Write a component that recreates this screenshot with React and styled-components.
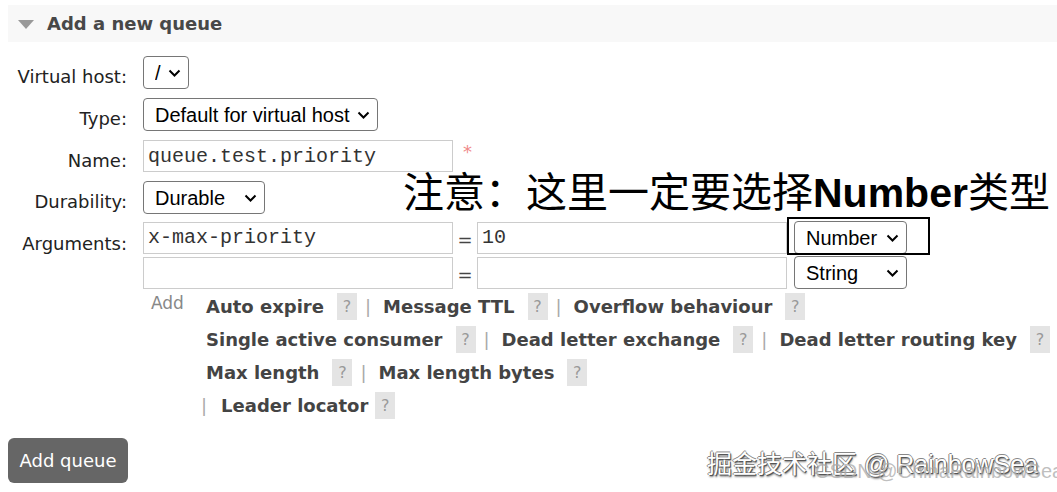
import styled, { createGlobalStyle } from "styled-components";

const GlobalStyle = createGlobalStyle`
  html, body {
    margin: 0;
    padding: 0;
    background: #fff;
  }
  body {
    font-family: "DejaVu Sans", Verdana, sans-serif;
    color: #444;
  }
  * {
    box-sizing: border-box;
  }
`;

const Page = styled.div`
  position: relative;
  width: 1057px;
  height: 492px;
  overflow: hidden;
  padding: 5px 0 0 8px;
`;

const SectionHeader = styled.div`
  display: flex;
  align-items: center;
  gap: 13px;
  height: 37px;
  padding-left: 10px;
  background: #f8f8f8;
`;

const Triangle = styled.span`
  width: 0;
  height: 0;
  border-left: 8px solid transparent;
  border-right: 8px solid transparent;
  border-top: 9px solid #999;
  margin-top: 2px;
`;

const SectionTitle = styled.h2`
  margin: 0;
  font-size: 18px;
  font-weight: bold;
  color: #484848;
`;

const Form = styled.div`
  display: grid;
  grid-template-columns: 119px 1fr;
  column-gap: 16px;
  row-gap: 9px;
  margin-top: 14px;
`;

const Label = styled.label`
  text-align: right;
  font-size: 18px;
  line-height: 22px;
  padding-top: 10px;
  color: #222;
  white-space: nowrap;
`;

const Field = styled.div`
  display: flex;
  align-items: center;
`;

const SelectBox = styled.div`
  position: relative;
  display: inline-flex;
  flex-shrink: 0;
`;

const Select = styled.select`
  appearance: none;
  -webkit-appearance: none;
  width: ${(p) => p.$width}px;
  height: 33px;
  padding: 0 0 0 11px;
  border: 1px solid #767676;
  border-radius: 4px;
  background: #fff;
  color: #000;
  font-family: "Liberation Sans", Arial, sans-serif;
  font-size: 20px;
`;

const Chevron = styled.svg`
  position: absolute;
  right: 8px;
  top: 13px;
  width: 13px;
  height: 8px;
  pointer-events: none;
`;

const TextInput = styled.input`
  width: ${(p) => p.$width}px;
  height: 32px;
  padding: 0 4px;
  border: 1px solid #ccc;
  border-radius: 0;
  background: #fff;
  color: #333;
  font-family: "Liberation Mono", "Courier New", monospace;
  font-size: 20px;
  outline: none;
`;

const Required = styled.span`
  color: #f08a8a;
  font-size: 18px;
  line-height: 20px;
  margin-left: 10px;
  align-self: flex-start;
  margin-top: 2px;
`;

const ArgRows = styled.div`
  display: flex;
  flex-direction: column;
  gap: 2px;
  margin-top: -2px;
`;

const ArgRow = styled.div`
  display: flex;
  align-items: center;
`;

const Equals = styled.span`
  width: 24px;
  text-align: center;
  font-size: 18px;
  color: #444;
  padding-top: 4px;
`;

const TypeSelect = styled.div`
  margin-left: 7px;
`;

const AddArea = styled.div`
  display: flex;
  margin-top: -1px;
`;

const AddLabel = styled.span`
  width: 63px;
  padding-left: 8px;
  font-size: 17px;
  line-height: 27px;
  color: #888;
`;

const LinkList = styled.div`
  display: flex;
  flex-direction: column;
`;

const LinkRow = styled.div`
  display: flex;
  align-items: center;
  height: 33px;
  margin-left: ${(p) => p.$shift || 0}px;
`;

const ArgLink = styled.span`
  font-size: 18px;
  font-weight: bold;
  color: #444;
  white-space: nowrap;
`;

const Help = styled.span`
  display: inline-flex;
  align-items: center;
  justify-content: center;
  width: 20px;
  height: 27px;
  margin-left: ${(p) => p.$gap ?? 13}px;
  background: #e4e4e4;
  color: #999;
  font-size: 16px;
`;

const Sep = styled.span`
  margin: ${(p) => (p.$lead ? "0 14px 0 0" : "0 12px 0 8px")};
  color: #aaa;
  font-size: 18px;
`;

const SubmitButton = styled.button`
  margin-top: 16px;
  width: 120px;
  height: 45px;
  border: none;
  border-radius: 6px;
  background: #666;
  color: #fff;
  font-family: "DejaVu Sans", Verdana, sans-serif;
  font-size: 18px;
`;

const Note = styled.div`
  position: absolute;
  left: 403px;
  top: 167px;
  font-family: "Noto Sans CJK SC", sans-serif;
  font-size: 41px;
  line-height: 44px;
  color: #000;
  white-space: nowrap;

  b {
    font-family: "Liberation Sans", Arial, sans-serif;
    font-weight: bold;
  }
`;

const Highlight = styled.div`
  position: absolute;
  left: 787px;
  top: 217px;
  width: 143px;
  height: 38px;
  border: 2px solid #000;
  pointer-events: none;
`;

const Watermark = styled.div`
  position: absolute;
  left: 707px;
  top: 444px;
  font-family: "Liberation Sans", "Noto Sans CJK SC", sans-serif;
  font-size: 25px;
  color: #fff;
  white-space: nowrap;
  text-shadow: 1px 1px 0 #555, -1px 0 0 #888, 0 -1px 0 #888, 1px 2px 2px #777;
`;

const SubMark = styled.div`
  position: absolute;
  left: 815px;
  top: 460px;
  font-family: "Liberation Sans", Arial, sans-serif;
  font-size: 20px;
  color: rgba(170, 170, 170, 0.75);
  white-space: nowrap;
`;

function Dropdown({ width, value, options }) {
  return (
    <SelectBox>
      <Select $width={width} defaultValue={value}>
        {options.map((o) => (
          <option key={o}>{o}</option>
        ))}
      </Select>
      <Chevron viewBox="0 0 13 8">
        <path d="M1.5 1.5 L6.5 6.5 L11.5 1.5" fill="none" stroke="#000" strokeWidth="2" />
      </Chevron>
    </SelectBox>
  );
}

const linkRows = [
  ["Auto expire", "Message TTL", "Overflow behaviour"],
  ["Single active consumer", "Dead letter exchange", "Dead letter routing key"],
  ["Max length", "Max length bytes"],
];

export default function App() {
  return (
    <Page>
      <GlobalStyle />
      <SectionHeader>
        <Triangle />
        <SectionTitle>Add a new queue</SectionTitle>
      </SectionHeader>

      <Form>
        <Label>Virtual host:</Label>
        <Field>
          <Dropdown width={46} value="/" options={["/"]} />
        </Field>

        <Label>Type:</Label>
        <Field>
          <Dropdown width={235} value="Default for virtual host" options={["Default for virtual host", "Classic", "Quorum", "Stream"]} />
        </Field>

        <Label>Name:</Label>
        <Field>
          <TextInput $width={310} defaultValue="queue.test.priority" />
          <Required>*</Required>
        </Field>

        <Label>Durability:</Label>
        <Field>
          <Dropdown width={122} value="Durable" options={["Durable", "Transient"]} />
        </Field>

        <Label>Arguments:</Label>
        <ArgRows>
          <ArgRow>
            <TextInput $width={310} defaultValue="x-max-priority" />
            <Equals>=</Equals>
            <TextInput $width={310} defaultValue="10" />
            <TypeSelect>
              <Dropdown width={113} value="Number" options={["String", "Number", "Boolean", "List"]} />
            </TypeSelect>
          </ArgRow>
          <ArgRow>
            <TextInput $width={310} defaultValue="" />
            <Equals>=</Equals>
            <TextInput $width={310} defaultValue="" />
            <TypeSelect>
              <Dropdown width={113} value="String" options={["String", "Number", "Boolean", "List"]} />
            </TypeSelect>
          </ArgRow>
          <AddArea>
            <AddLabel>Add</AddLabel>
            <LinkList>
              {linkRows.map((row, i) => (
                <LinkRow key={i}>
                  {row.map((name, j) => (
                    <span key={name} style={{ display: "contents" }}>
                      {j > 0 && <Sep>|</Sep>}
                      <ArgLink>{name}</ArgLink>
                      <Help>?</Help>
                    </span>
                  ))}
                </LinkRow>
              ))}
              <LinkRow $shift={-5}>
                <Sep $lead>|</Sep>
                <ArgLink>Leader locator</ArgLink>
                <Help $gap={7}>?</Help>
              </LinkRow>
            </LinkList>
          </AddArea>
        </ArgRows>
      </Form>

      <SubmitButton>Add queue</SubmitButton>

      <Note>
        注意：这里一定要选择<b>Number</b>类型
      </Note>
      <Highlight />
      <Watermark>掘金技术社区 @ RainbowSea</Watermark>
      <SubMark>CSDN @ChinaRainbowSea</SubMark>
    </Page>
  );
}
